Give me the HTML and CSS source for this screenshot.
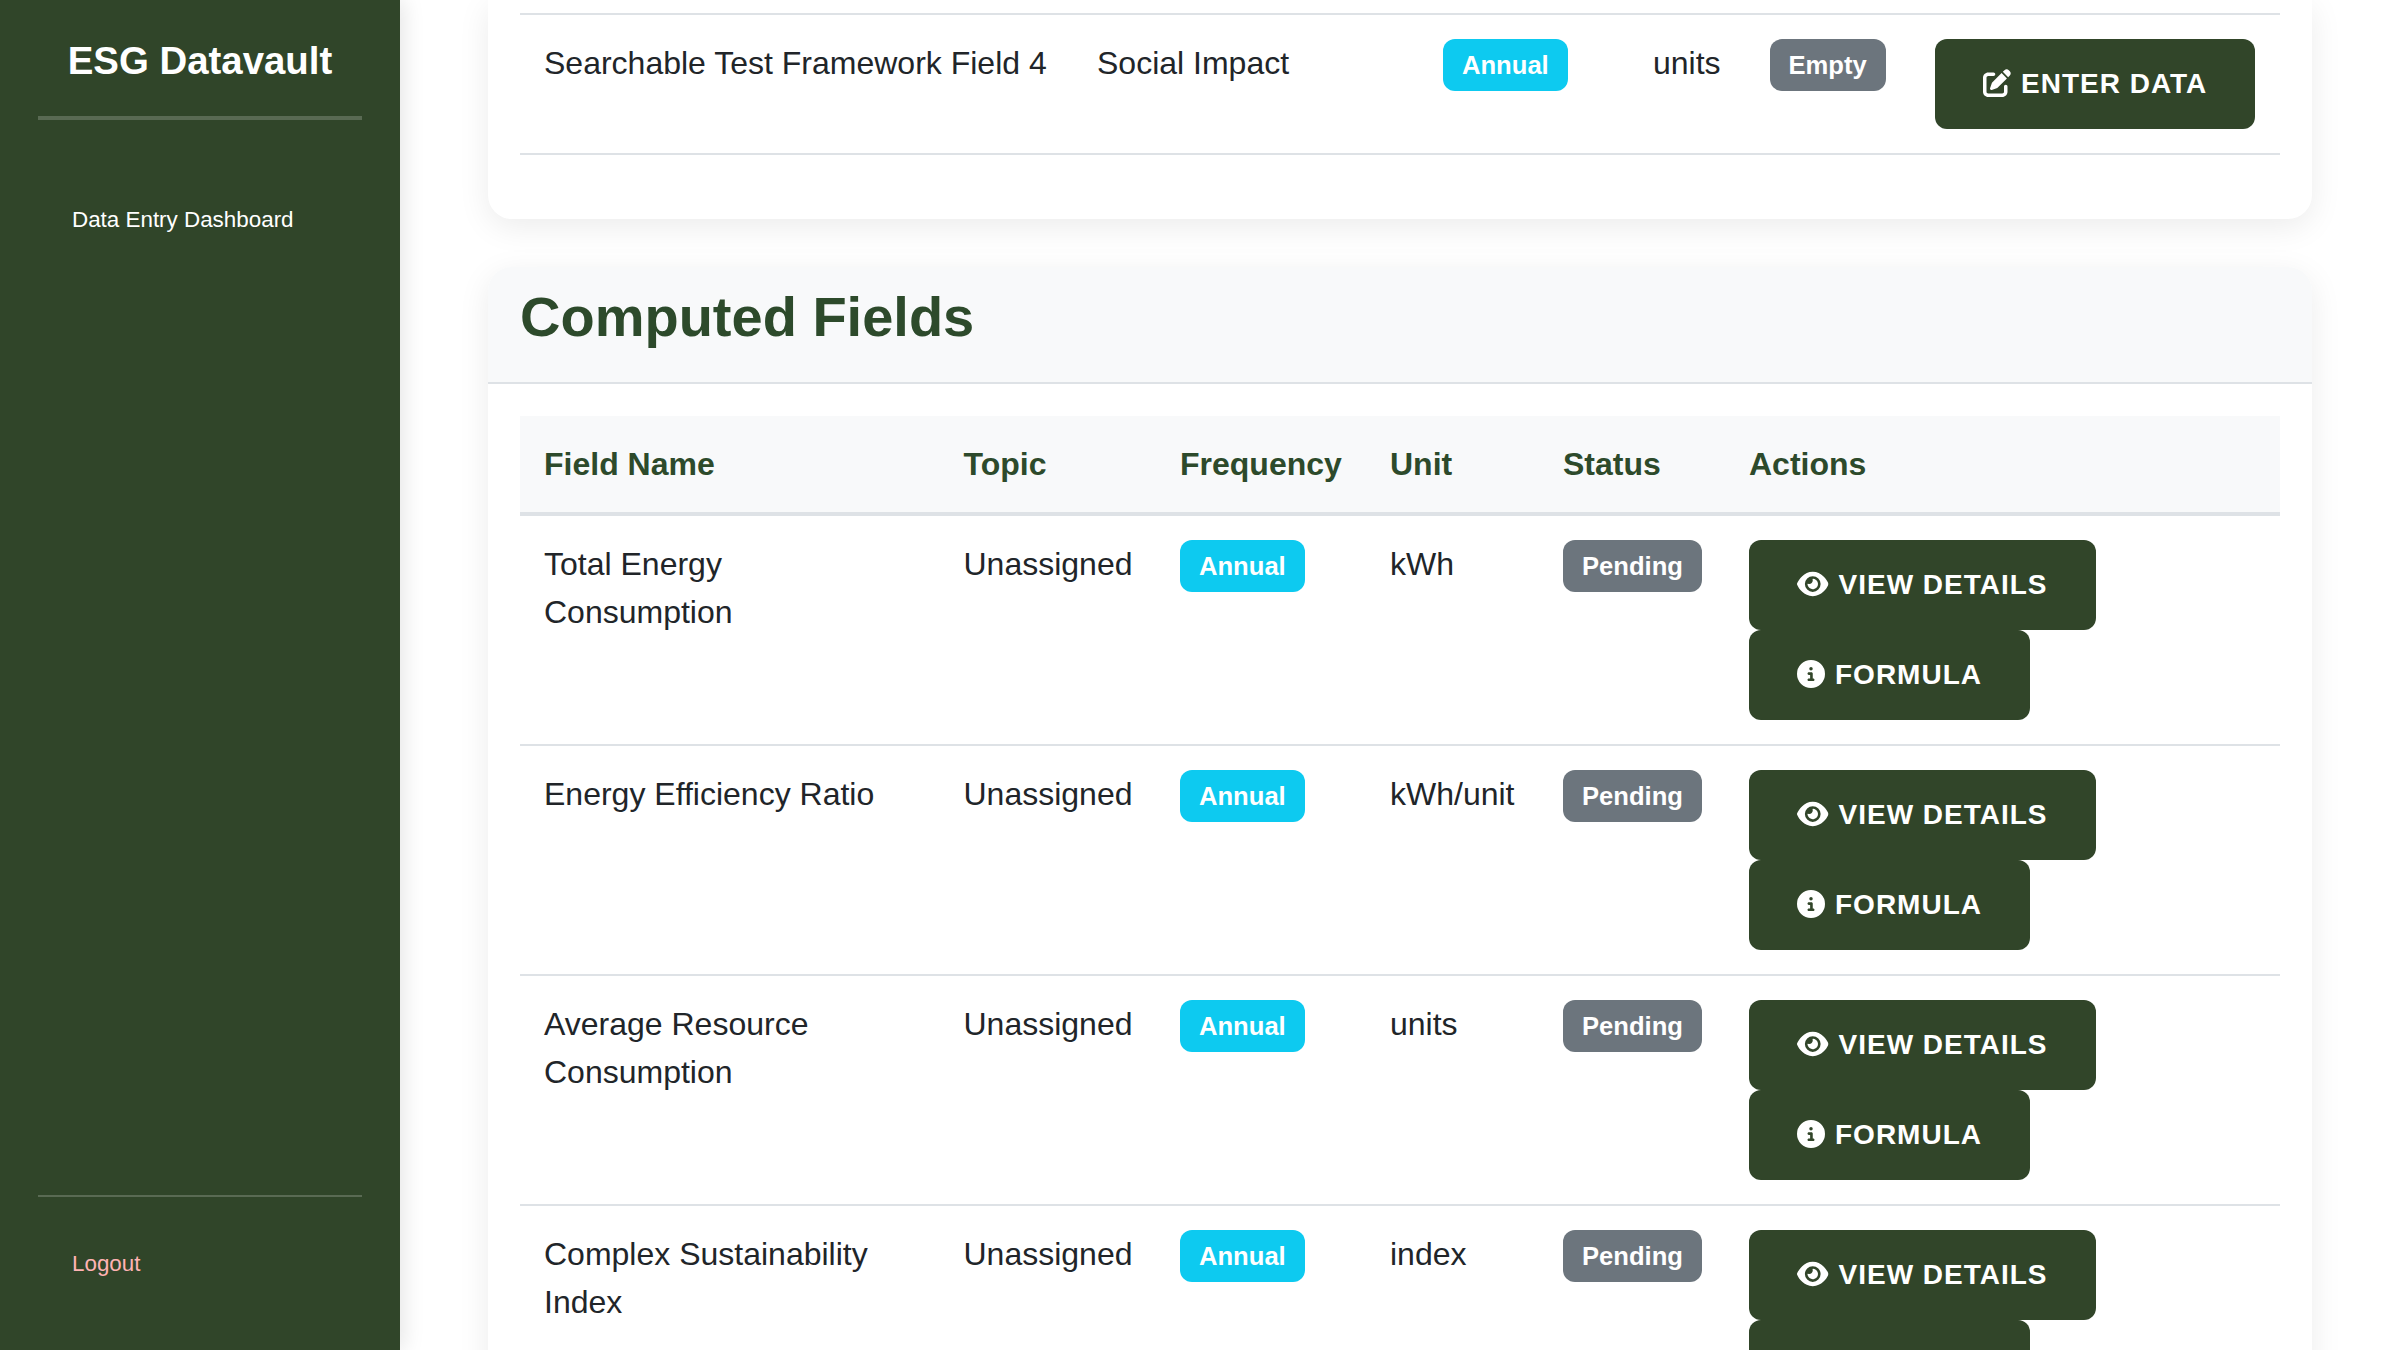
FILE: index.html
```html
<!doctype html>
<html lang="en">
<head>
  <meta charset="utf-8" />
  <title>ESG Datavault - Data Entry Dashboard</title>
  <link rel="stylesheet" href="styles.css">
</head>
<body>
  <svg class="icon-defs" width="0" height="0">
    <symbol id="icon-edit" viewBox="0 0 512 512">
      <path d="M471.6 21.7c-21.9-21.9-57.3-21.9-79.2 0L362.3 51.7l97.9 97.9 30.1-30.1c21.9-21.9 21.9-57.3 0-79.2L471.6 21.7zm-299.2 220c-6.1 6.1-10.8 13.6-13.5 21.9l-29.6 88.8c-2.9 8.6-.6 18.1 5.8 24.6s15.9 8.7 24.6 5.8l88.8-29.6c8.2-2.7 15.7-7.4 21.9-13.5L437.7 172.3 339.7 74.3 172.4 241.7zM96 64C43 64 0 107 0 160V416c0 53 43 96 96 96H352c53 0 96-43 96-96V320c0-17.7-14.3-32-32-32s-32 14.3-32 32v96c0 17.7-14.3 32-32 32H96c-17.7 0-32-14.3-32-32V160c0-17.7 14.3-32 32-32h96c17.7 0 32-14.3 32-32s-14.3-32-32-32H96z"/>
    </symbol>
    <symbol id="icon-eye" viewBox="0 0 576 512">
      <path d="M288 32c-80.8 0-145.5 36.8-192.6 80.6C48.6 156 17.3 208 2.5 243.7c-3.3 7.9-3.3 16.7 0 24.6C17.3 304 48.6 356 95.4 399.4C142.5 443.2 207.2 480 288 480s145.5-36.8 192.6-80.6c46.8-43.5 78.1-95.4 93-131.1c3.3-7.9 3.3-16.7 0-24.6c-14.9-35.7-46.2-87.7-93-131.1C433.5 68.8 368.8 32 288 32zM144 256a144 144 0 1 1 288 0 144 144 0 1 1 -288 0zm144-64c0 35.3-28.7 64-64 64c-7.1 0-13.9-1.2-20.3-3.3c-5.5-1.8-11.9 1.6-11.7 7.4c.3 6.9 1.3 13.8 3.2 20.7c13.7 51.2 66.4 81.6 117.6 67.9s81.6-66.4 67.9-117.6c-11.1-41.5-47.8-69.4-88.6-71.1c-5.8-.2-9.2 6.1-7.4 11.7c2.1 6.4 3.3 13.2 3.3 20.3z"/>
    </symbol>
    <symbol id="icon-info" viewBox="0 0 512 512">
      <path d="M256 512A256 256 0 1 0 256 0a256 256 0 1 0 0 512zM216 336h24V272H216c-13.3 0-24-10.7-24-24s10.7-24 24-24h48c13.3 0 24 10.7 24 24v88h8c13.3 0 24 10.7 24 24s-10.7 24-24 24H216c-13.3 0-24-10.7-24-24s10.7-24 24-24zm40-208a32 32 0 1 1 0 64 32 32 0 1 1 0-64z"/>
    </symbol>
  </svg>

  <div class="app">
    <aside class="sidebar">
      <h1 class="brand">ESG Datavault</h1>
      <nav class="side-nav">
        <a href="#" class="side-link">Data Entry Dashboard</a>
      </nav>
      <div class="side-footer">
        <a href="#" class="logout-link">Logout</a>
      </div>
    </aside>

    <main class="content">
      <section class="card card-cut">
        <table class="fields raw-fields">
          <colgroup>
            <col class="raw-name"><col class="raw-topic"><col class="raw-freq"><col class="raw-unit"><col class="raw-status"><col>
          </colgroup>
          <tbody>
            <tr>
              <td>Searchable Test Framework Field 4</td>
              <td>Social Impact</td>
              <td><span class="badge badge-info">Annual</span></td>
              <td>units</td>
              <td><span class="badge badge-muted">Empty</span></td>
              <td><a href="#" class="btn"><svg class="btn-icon"><use href="#icon-edit"/></svg>ENTER DATA</a></td>
            </tr>
          </tbody>
        </table>
      </section>

      <section class="card">
        <header class="card-head">
          <h2>Computed Fields</h2>
        </header>
        <div class="card-body">
          <table class="fields computed-fields">
            <colgroup>
              <col class="comp-name"><col class="comp-topic"><col class="comp-freq"><col class="comp-unit"><col class="comp-status"><col>
            </colgroup>
            <thead>
              <tr>
                <th>Field Name</th>
                <th>Topic</th>
                <th>Frequency</th>
                <th>Unit</th>
                <th>Status</th>
                <th>Actions</th>
              </tr>
            </thead>
            <tbody>
              <tr>
                <td>Total Energy Consumption</td>
                <td>Unassigned</td>
                <td><span class="badge badge-info">Annual</span></td>
                <td>kWh</td>
                <td><span class="badge badge-muted">Pending</span></td>
                <td>
                  <a href="#" class="btn"><svg class="btn-icon icon-wide"><use href="#icon-eye"/></svg>VIEW DETAILS</a>
                  <a href="#" class="btn"><svg class="btn-icon"><use href="#icon-info"/></svg>FORMULA</a>
                </td>
              </tr>
              <tr>
                <td>Energy Efficiency Ratio</td>
                <td>Unassigned</td>
                <td><span class="badge badge-info">Annual</span></td>
                <td>kWh/unit</td>
                <td><span class="badge badge-muted">Pending</span></td>
                <td>
                  <a href="#" class="btn"><svg class="btn-icon icon-wide"><use href="#icon-eye"/></svg>VIEW DETAILS</a>
                  <a href="#" class="btn"><svg class="btn-icon"><use href="#icon-info"/></svg>FORMULA</a>
                </td>
              </tr>
              <tr>
                <td>Average Resource Consumption</td>
                <td>Unassigned</td>
                <td><span class="badge badge-info">Annual</span></td>
                <td>units</td>
                <td><span class="badge badge-muted">Pending</span></td>
                <td>
                  <a href="#" class="btn"><svg class="btn-icon icon-wide"><use href="#icon-eye"/></svg>VIEW DETAILS</a>
                  <a href="#" class="btn"><svg class="btn-icon"><use href="#icon-info"/></svg>FORMULA</a>
                </td>
              </tr>
              <tr>
                <td>Complex Sustainability Index</td>
                <td>Unassigned</td>
                <td><span class="badge badge-info">Annual</span></td>
                <td>index</td>
                <td><span class="badge badge-muted">Pending</span></td>
                <td>
                  <a href="#" class="btn"><svg class="btn-icon icon-wide"><use href="#icon-eye"/></svg>VIEW DETAILS</a>
                  <a href="#" class="btn"><svg class="btn-icon"><use href="#icon-info"/></svg>FORMULA</a>
                </td>
              </tr>
            </tbody>
          </table>
        </div>
      </section>
    </main>
  </div>
</body>
</html>
```

FILE: styles.css
```css
* {
  box-sizing: border-box;
}

html, body {
  margin: 0;
  height: 1350px;
  overflow: hidden;
}

body {
  background: #fff;
  color: #212529;
  font-family: "Liberation Sans", Arial, sans-serif;
  font-size: 32px;
  line-height: 48px;
}

.icon-defs {
  display: block;
  height: 0;
}

.app {
  display: flex;
  height: 1350px;
}

/* sidebar */
.sidebar {
  flex: 0 0 400px;
  display: flex;
  flex-direction: column;
  background: #304529;
  box-shadow: 4px 0 20px rgba(0, 0, 0, 0.1);
  position: relative;
  z-index: 2;
}

.brand {
  margin: 0 38px;
  padding: 40px 0 34px;
  border-bottom: 4px solid rgba(255, 255, 255, 0.2);
  color: #fff;
  font-size: 38.4px;
  line-height: 42px;
  font-weight: bold;
  text-align: center;
}

.side-nav {
  flex: 1;
  padding: 87px 0 0 72px;
}

.side-link,
.logout-link {
  display: block;
  font-size: 22.4px;
  line-height: 26px;
  text-decoration: none;
}

.side-link {
  color: #fff;
}

.side-footer {
  margin: 0 38px;
  padding: 54px 0 73px 34px;
  border-top: 2px solid rgba(255, 255, 255, 0.2);
}

.logout-link {
  color: #ffb3b3;
}

/* main column */
.content {
  flex: 1;
  min-width: 0;
  padding: 0 88px;
  display: flex;
  flex-direction: column;
  gap: 48px;
}

.card {
  flex: none;
  background: #fff;
  border-radius: 24px;
  box-shadow: 0 8px 32px rgba(0, 0, 0, 0.08);
}

.card-cut {
  padding: 13px 32px 64px;
  border-radius: 0 0 24px 24px;
}

.card-head {
  padding: 16px 32px 32px;
  background: #f8f9fa;
  border-bottom: 2px solid #dee2e6;
  border-radius: 24px 24px 0 0;
}

.card-head h2 {
  margin: 0;
  color: #2d4a2b;
  font-size: 56px;
  line-height: 67px;
  font-weight: bold;
}

.card-body {
  padding: 32px;
}

/* tables */
.fields {
  width: 100%;
  border-collapse: collapse;
  table-layout: fixed;
}

.fields td,
.fields th {
  padding: 24px;
  text-align: left;
  vertical-align: top;
}

.fields td {
  border-bottom: 2px solid #dee2e6;
}

.fields th {
  background: #f8f9fa;
  border-bottom: 4px solid #dee2e6;
  color: #2d4a2b;
  font-weight: bold;
}

.raw-fields {
  border-top: 2px solid #dee2e6;
}

.raw-name { width: 553px; }
.raw-topic { width: 346px; }
.raw-freq { width: 210px; }
.raw-unit { width: 116.5px; }
.raw-status { width: 165.5px; }

.comp-name { width: 419.5px; }
.comp-topic { width: 216.5px; }
.comp-freq { width: 210px; }
.comp-unit { width: 173px; }
.comp-status { width: 186px; }

/* badges and buttons */
.badge {
  display: inline-block;
  padding: 11px 19px;
  border-radius: 12px;
  color: #fff;
  font-size: 25.6px;
  line-height: 30px;
  font-weight: bold;
  vertical-align: top;
}

.badge-info {
  background: #0dcaf0;
}

.badge-muted {
  background: #6c757d;
}

.btn {
  display: inline-block;
  padding: 21px 48px;
  border-radius: 12px;
  background: #314529;
  color: #fff;
  font-size: 28px;
  line-height: 48px;
  font-weight: bold;
  letter-spacing: 1px;
  text-decoration: none;
  white-space: nowrap;
  vertical-align: top;
}

.btn-icon {
  display: inline-block;
  width: 28px;
  height: 28px;
  margin-right: 10px;
  fill: currentColor;
  vertical-align: -4px;
}

.icon-wide {
  width: 31.5px;
}
```
